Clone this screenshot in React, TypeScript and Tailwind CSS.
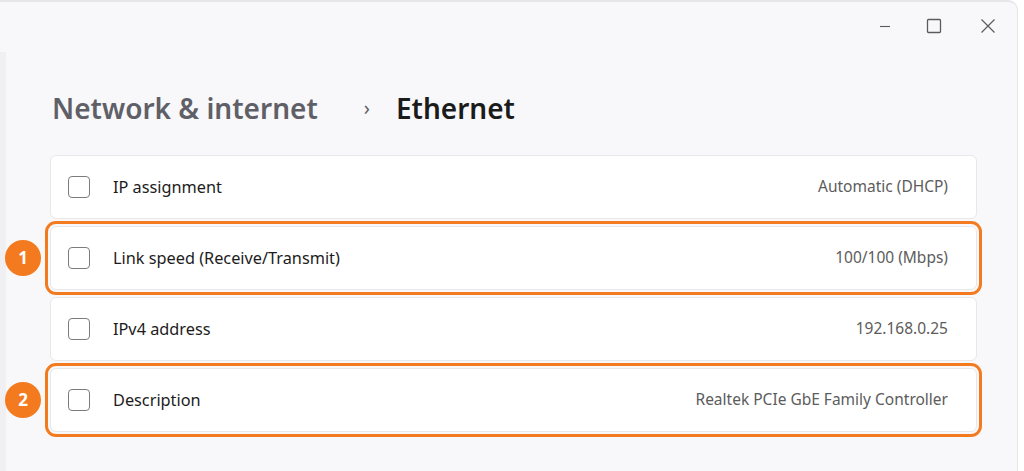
import React from "react";

// Ethernet properties rows as shown in Settings
const rows = [
  { label: "IP assignment", value: "Automatic (DHCP)", badge: null },
  { label: "Link speed (Receive/Transmit)", value: "100/100 (Mbps)", badge: "1" },
  { label: "IPv4 address", value: "192.168.0.25", badge: null },
  { label: "Description", value: "Realtek PCIe GbE Family Controller", badge: "2" },
];

function WindowControls() {
  return (
    <div className="flex items-center pr-[21px] text-[#5b5b5b]">
      <svg width="16" height="16" viewBox="0 0 16 16">
        <path d="M3 8.5h10" stroke="currentColor" strokeWidth="1.1" fill="none" />
      </svg>
      <svg width="16" height="16" viewBox="0 0 16 16" className="ml-[33px]">
        <rect x="1.5" y="1.5" width="13" height="13" rx="1" stroke="currentColor" strokeWidth="1.3" fill="none" />
      </svg>
      <svg width="16" height="16" viewBox="0 0 16 16" className="ml-[38px]">
        <path d="M1.5 1.5l13 13M14.5 1.5l-13 13" stroke="currentColor" strokeWidth="1.2" fill="none" />
      </svg>
    </div>
  );
}

function Row({ row }: { row: (typeof rows)[0] }) {
  const highlighted = row.badge !== null;
  return (
    <div className="relative">
      {highlighted && (
        <div className="absolute left-[-45px] top-1/2 -translate-y-1/2 w-[36px] h-[36px] rounded-full bg-[#f37a1f] flex items-center justify-center text-white text-[17px] font-bold">
          {row.badge}
        </div>
      )}
      <div
        className={`h-[64px] flex items-center bg-white rounded-[6px] border border-[#e8e8ea] pl-[17px] pr-[28px] ${
          highlighted ? "outline-[3px] outline-solid outline-[#f37a1f] outline-offset-[2px]" : ""
        }`}
      >
        <div className="w-[22px] h-[22px] rounded-[4px] border-[1.5px] border-[#7c7c7c] bg-white" />
        <span className="ml-[23px] text-[16.3px] text-[#1c1c1c]">{row.label}</span>
        <span className="ml-auto text-[15.5px] text-[#5c5c5c]">{row.value}</span>
      </div>
    </div>
  );
}

export default function App() {
  return (
    <div
      className="w-[1024px] h-[471px] overflow-hidden bg-white"
      style={{ fontFamily: '"Noto Sans", "Open Sans", sans-serif' }}
    >
      <div className="w-[1018px] h-[471px] flex bg-[#f8f8fa] border-t-2 border-r border-[#e6e6e8] rounded-tr-[10px]">
        <div className="w-[6px] mt-[50px] bg-[#f0f0f2]" />
        <div className="flex-1 flex flex-col">
          <div className="h-[48px] flex items-center justify-end">
            <WindowControls />
          </div>
          <div className="flex items-center h-[66px] mt-[25px] pl-[46px]">
            <span className="text-[28px] font-semibold text-[#5f6067]">Network &amp; internet</span>
            <span className="ml-[46px] text-[20px] text-[#5f6067]">›</span>
            <span className="ml-[26px] text-[28px] font-semibold text-[#1b1b1b]">Ethernet</span>
          </div>
          <div className="flex flex-col gap-[7px] mt-[14px] ml-[44px] w-[927px]">
            {rows.map((row) => (
              <Row key={row.label} row={row} />
            ))}
          </div>
        </div>
      </div>
    </div>
  );
}
